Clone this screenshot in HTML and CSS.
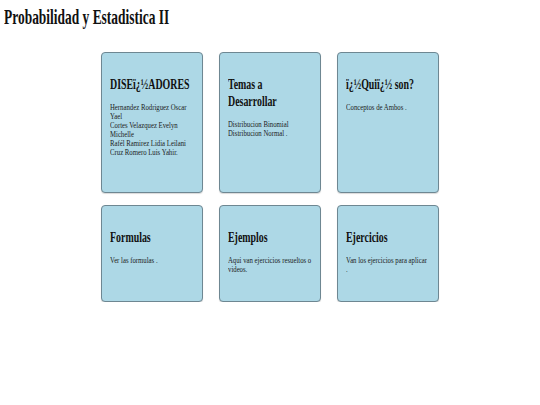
FILE: index.html
```html
<!DOCTYPE html>
<html lang="es">
<head>
<meta charset="utf-8">
<title>Probabilidad y Estadistica II</title>
<link rel="stylesheet" href="styles.css">
</head>
<body>
<div class="page">
  <h1 class="title">Probabilidad y Estadistica II</h1>
  <div class="grid">
    <div class="card">
      <h2 class="card-title">DISEï¿½ADORES</h2>
      <p class="card-text">Hernandez Rodriguez Oscar Yael<br>Cortes Velazquez Evelyn Michelle<br>Rafél Ramirez Lidia Leilani<br>Cruz Romero Luis Yahir.</p>
    </div>
    <div class="card">
      <h2 class="card-title">Temas a Desarrollar</h2>
      <p class="card-text">Distribucion Binomial<br>Distribucion Normal .</p>
    </div>
    <div class="card">
      <h2 class="card-title">ï¿½Quiï¿½ son?</h2>
      <p class="card-text">Conceptos de Ambos .</p>
    </div>
    <div class="card">
      <h2 class="card-title">Formulas</h2>
      <p class="card-text">Ver las formulas .</p>
    </div>
    <div class="card">
      <h2 class="card-title">Ejemplos</h2>
      <p class="card-text">Aqui van ejercicios resueltos o videos.</p>
    </div>
    <div class="card">
      <h2 class="card-title">Ejercicios</h2>
      <p class="card-text">Van los ejercicios para aplicar .</p>
    </div>
  </div>
</div>
</body>
</html>
```
FILE: styles.css
```css
html, body {
  margin: 0;
  padding: 0;
  background: #ffffff;
}

.page {
  font-family: "Liberation Serif", "Times New Roman", serif;
  color: #111111;
  padding: 5px 0 0 4px;
}

.title {
  margin: 0;
  font-size: 21px;
  font-weight: bold;
  line-height: normal;
  white-space: nowrap;
  transform: scaleX(0.64);
  transform-origin: left top;
}

.grid {
  display: grid;
  grid-template-columns: repeat(3, 102px);
  grid-template-rows: 141px 97px;
  gap: 12px 16px;
  justify-content: center;
  margin: 22px 0 0 -4px;
}

.card {
  box-sizing: border-box;
  background: #add8e6;
  border: 1px solid #6e8792;
  border-radius: 4px;
  box-shadow: 0 1px 1px rgba(0, 0, 0, 0.15);
  padding: 0 8px;
  overflow: visible;
}

.card-title {
  margin: 23px 0 10px 0;
  font-size: 15px;
  font-weight: bold;
  line-height: normal;
  width: calc(100% / 0.66);
  transform: scaleX(0.66);
  transform-origin: left top;
}

.card-text {
  margin: 0;
  font-size: 9px;
  line-height: 9px;
  color: #1a1a1a;
  width: calc(100% / 0.75);
  transform: scaleX(0.75);
  transform-origin: left top;
}
```
